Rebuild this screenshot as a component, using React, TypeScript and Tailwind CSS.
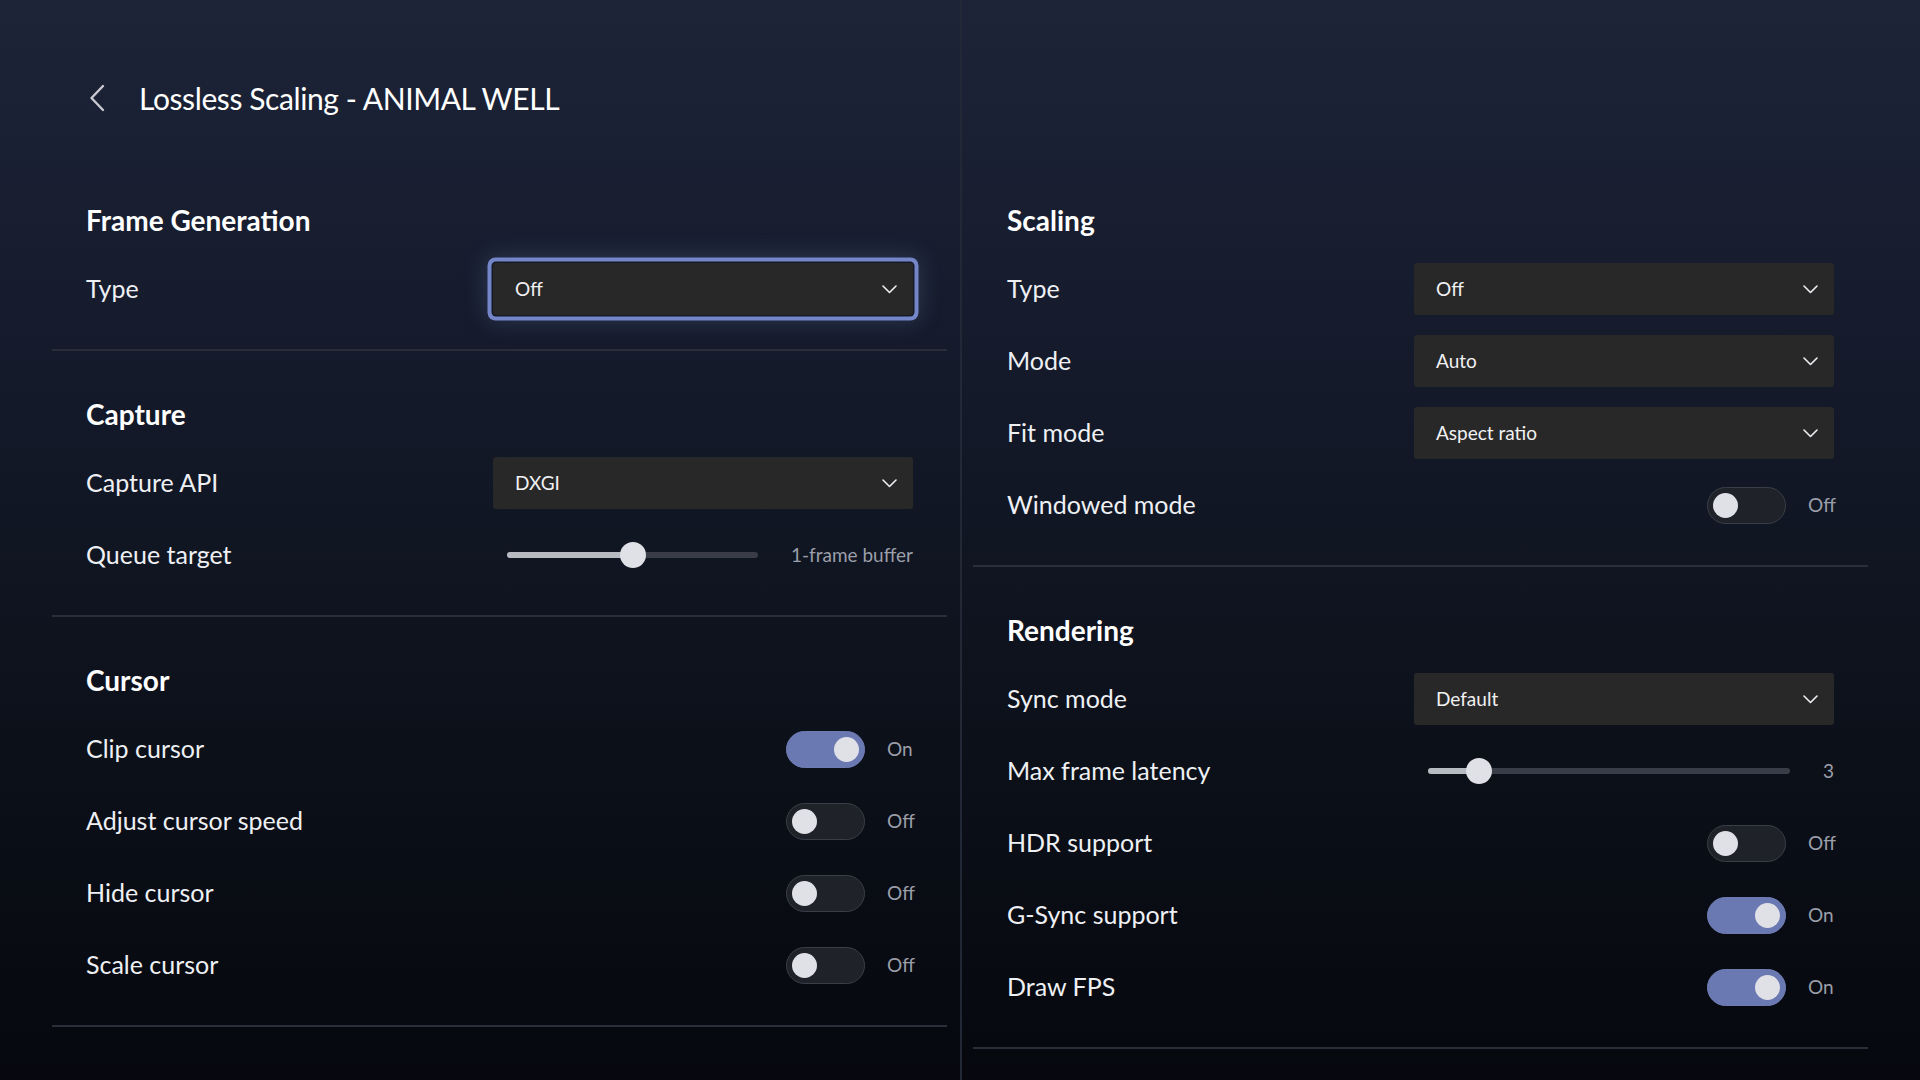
import React from "react";

type Control =
  | { kind: "select"; value: string; focused?: boolean }
  | { kind: "toggle"; on: boolean }
  | { kind: "slider"; pct: number; value: string };

type Item = { label: string; control: Control };
type Group = { title: string; items: Item[] };

const leftGroups: Group[] = [
  {
    title: "Frame Generation",
    items: [{ label: "Type", control: { kind: "select", value: "Off", focused: true } }],
  },
  {
    title: "Capture",
    items: [
      { label: "Capture API", control: { kind: "select", value: "DXGI" } },
      { label: "Queue target", control: { kind: "slider", pct: 50, value: "1-frame buffer" } },
    ],
  },
  {
    title: "Cursor",
    items: [
      { label: "Clip cursor", control: { kind: "toggle", on: true } },
      { label: "Adjust cursor speed", control: { kind: "toggle", on: false } },
      { label: "Hide cursor", control: { kind: "toggle", on: false } },
      { label: "Scale cursor", control: { kind: "toggle", on: false } },
    ],
  },
];

const rightGroups: Group[] = [
  {
    title: "Scaling",
    items: [
      { label: "Type", control: { kind: "select", value: "Off" } },
      { label: "Mode", control: { kind: "select", value: "Auto" } },
      { label: "Fit mode", control: { kind: "select", value: "Aspect ratio" } },
      { label: "Windowed mode", control: { kind: "toggle", on: false } },
    ],
  },
  {
    title: "Rendering",
    items: [
      { label: "Sync mode", control: { kind: "select", value: "Default" } },
      { label: "Max frame latency", control: { kind: "slider", pct: 14, value: "3" } },
      { label: "HDR support", control: { kind: "toggle", on: false } },
      { label: "G-Sync support", control: { kind: "toggle", on: true } },
      { label: "Draw FPS", control: { kind: "toggle", on: true } },
    ],
  },
];

function Chevron() {
  return (
    <svg width="15" height="9" viewBox="0 0 15 9" fill="none">
      <path d="M1 1 L7.5 7.5 L14 1" stroke="#eceef2" strokeWidth="1.6" strokeLinecap="round" strokeLinejoin="round" />
    </svg>
  );
}

function Select({ value, focused }: { value: string; focused?: boolean }) {
  return (
    <div
      className={`flex h-[52px] w-[420px] items-center justify-between rounded-[3px] bg-[#282828] pl-[22px] pr-[16px] ${
        focused
          ? "shadow-[0_0_0_1.5px_#151a28,0_0_0_5.5px_#7486c8,0_0_22px_8px_rgba(130,145,210,0.2)]"
          : ""
      }`}
    >
      <span className="text-[19px] text-[#f1f1f3]">{value}</span>
      <Chevron />
    </div>
  );
}

function Toggle({ on }: { on: boolean }) {
  return (
    <div className="flex items-center">
      <div
        className={`flex h-[37px] w-[79px] items-center rounded-full border-[1.5px] px-[5px] ${
          on ? "justify-end border-[#6f7cb4] bg-[#6b79b3]" : "justify-start border-[#3a3e47] bg-[#1f2229]"
        }`}
      >
        <div className="h-[25px] w-[25px] rounded-full bg-[#e0e1e7]" />
      </div>
      <span className="ml-[22px] w-[26px] text-[19px] text-[#9b9fa9]">{on ? "On" : "Off"}</span>
    </div>
  );
}

function Slider({ pct, value }: { pct: number; value: string }) {
  return (
    <div className="flex w-[420px] items-center pl-[14px]">
      <div className="relative h-[6px] flex-1 rounded-full bg-[#3a3d48]">
        <div className="h-full rounded-full bg-[#b8bac1]" style={{ width: `${pct}%` }} />
        <div
          className="absolute top-1/2 h-[26px] w-[26px] -translate-x-1/2 -translate-y-1/2 rounded-full bg-[#e0e1e7]"
          style={{ left: `${pct}%` }}
        />
      </div>
      <span className="ml-[33px] text-[19px] text-[#9b9fa9]">{value}</span>
    </div>
  );
}

function Row({ item }: { item: Item }) {
  const c = item.control;
  return (
    <div className="flex h-[72px] items-center justify-between">
      <span className="text-[25px] text-[#eef0f4]">{item.label}</span>
      {c.kind === "select" && <Select value={c.value} focused={c.focused} />}
      {c.kind === "toggle" && <Toggle on={c.on} />}
      {c.kind === "slider" && <Slider pct={c.pct} value={c.value} />}
    </div>
  );
}

function Section({ group }: { group: Group }) {
  return (
    <div className="border-b-2 border-[#2a2e38] px-[34px] pb-[24px] pt-[47px]">
      <div className="flex h-[32px] items-center text-[28px] font-bold text-white">{group.title}</div>
      <div className="mt-[17px] flex flex-col">
        {group.items.map((it) => (
          <Row key={it.label} item={it} />
        ))}
      </div>
    </div>
  );
}

export default function App() {
  return (
    <div
      className="grid h-[1080px] w-[1920px] grid-cols-2 overflow-hidden bg-[linear-gradient(180deg,#1d2438_0%,#141a2a_35%,#0c1019_70%,#06080e_100%)]"
      style={{ fontFamily: "Lato, 'Noto Sans', sans-serif" }}
    >
      <div className="flex flex-col pl-[52px] pr-[13px]">
        <div className="flex h-[157px] items-start px-[34px] pt-[78px]">
          <div className="flex h-[40px] items-center">
            <svg className="ml-[3px]" width="16" height="28" viewBox="0 0 16 28" fill="none">
              <path d="M14 2 L2.5 14 L14 26" stroke="#c9cad0" strokeWidth="2.4" strokeLinecap="round" strokeLinejoin="round" />
            </svg>
            <h1 className="ml-[34px] text-[30px] font-normal tracking-[-0.4px] text-white">Lossless Scaling - ANIMAL WELL</h1>
          </div>
        </div>
        {leftGroups.map((g) => (
          <Section key={g.title} group={g} />
        ))}
      </div>
      <div className="flex flex-col border-l-2 border-[#232836] pl-[11px] pr-[52px] pt-[157px]">
        {rightGroups.map((g) => (
          <Section key={g.title} group={g} />
        ))}
      </div>
    </div>
  );
}
